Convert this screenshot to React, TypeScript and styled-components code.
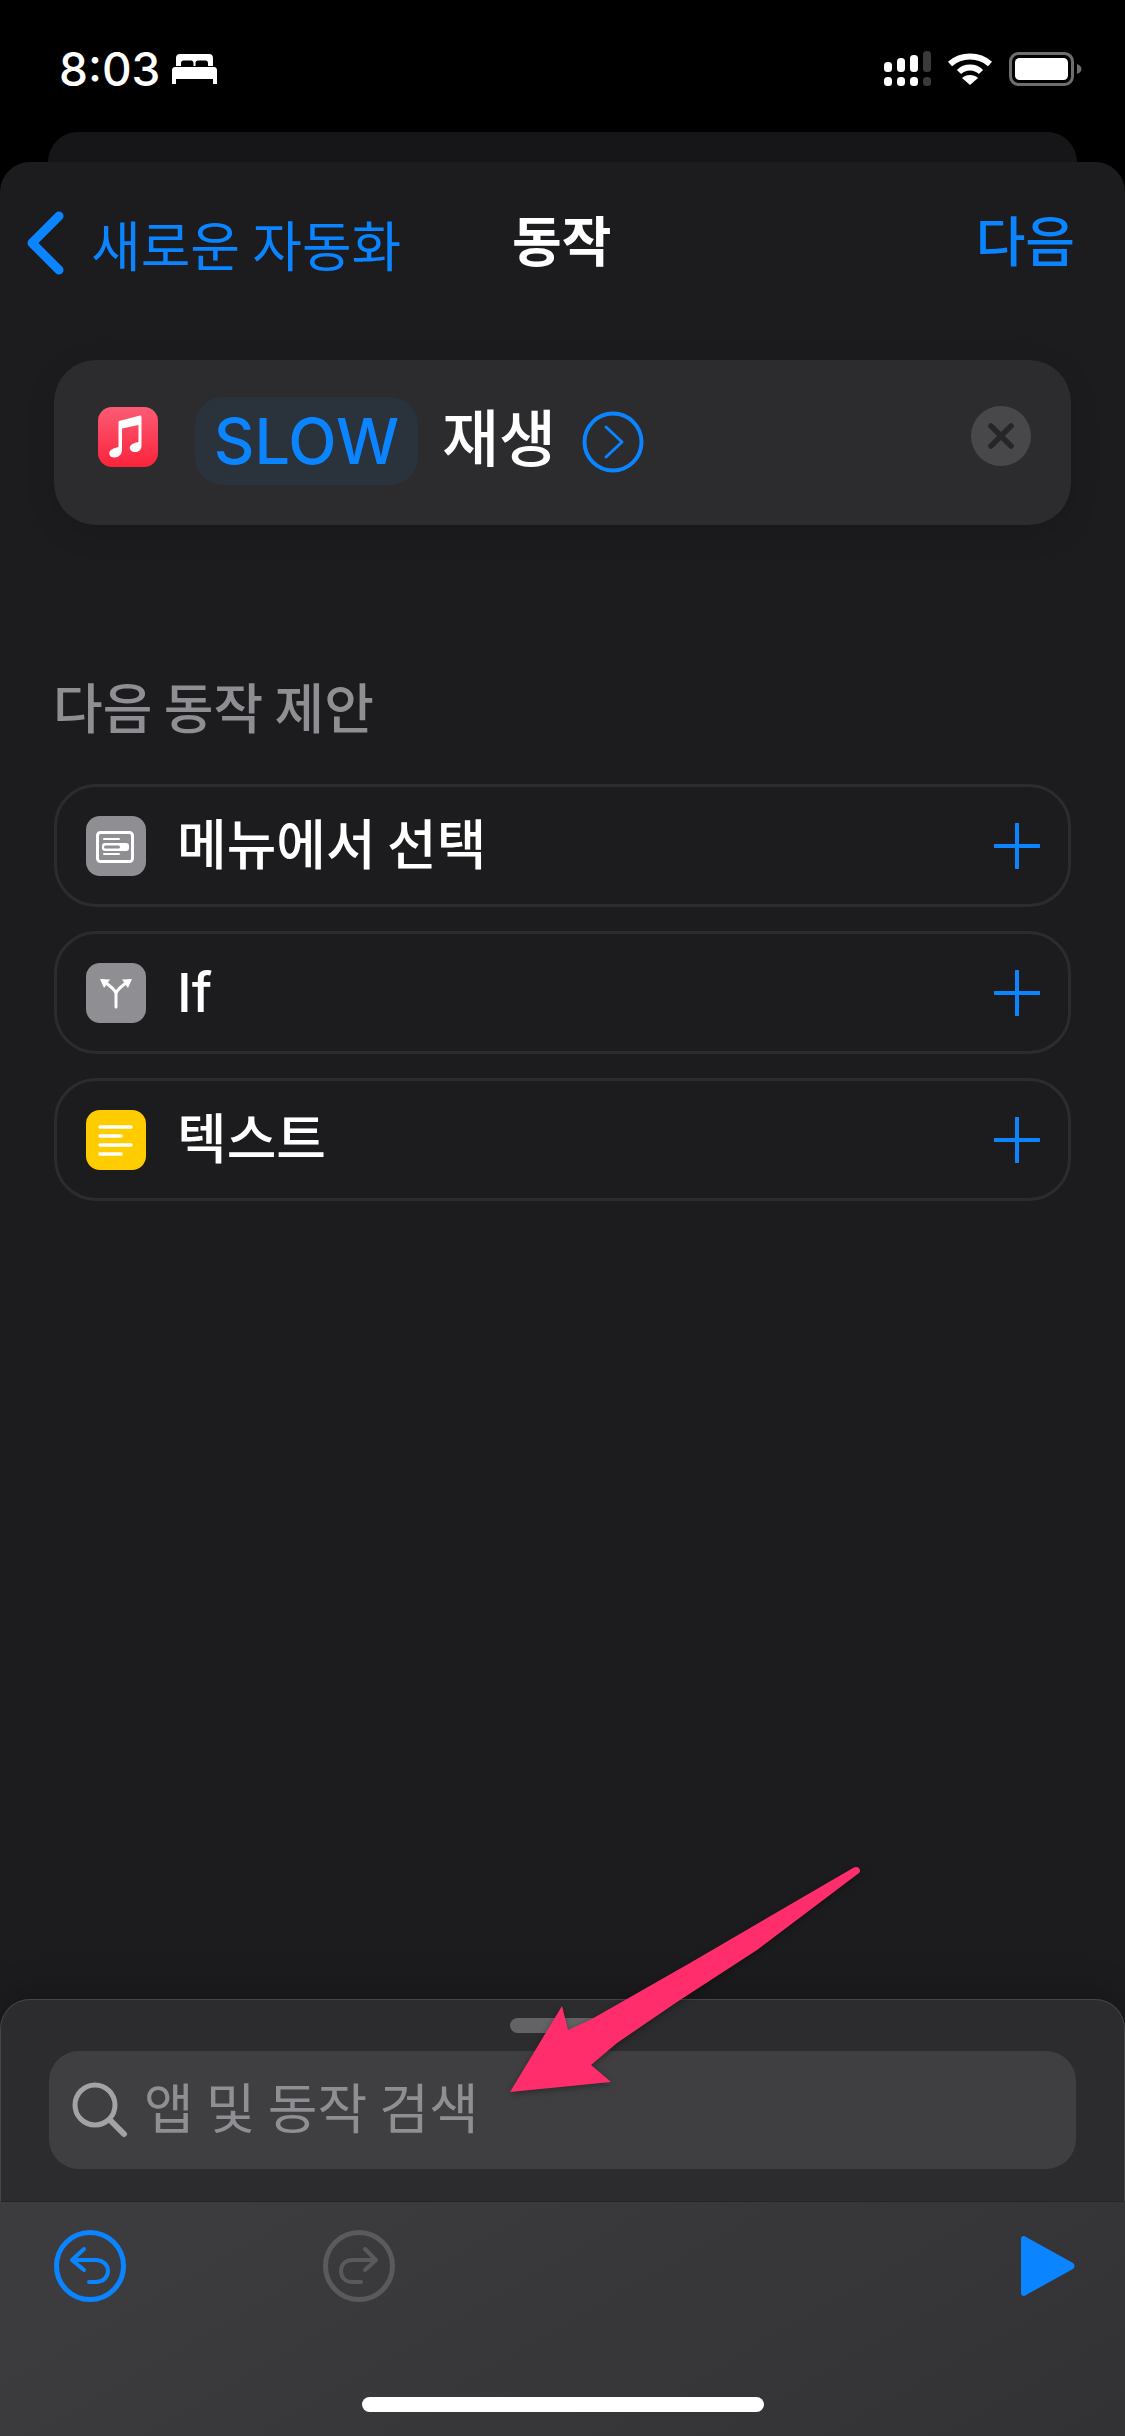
import React from "react";
import styled, { createGlobalStyle } from "styled-components";

const Blue = "#0a84ff";
const KoreanFont = `Inter, "Liberation Sans", "Noto Sans CJK KR", sans-serif`;

const GlobalStyle = createGlobalStyle`
  html, body {
    margin: 0;
    padding: 0;
    background: #000;
  }
  * {
    box-sizing: border-box;
  }
`;

const Screen = styled.div`
  position: relative;
  width: 1125px;
  height: 2436px;
  overflow: hidden;
  background: #000;
  display: flex;
  flex-direction: column;
  font-family: ${KoreanFont};
  word-spacing: -3px;
`;

const StatusBar = styled.div`
  height: 132px;
  padding: 45px 43px 0 59px;
  display: flex;
  justify-content: space-between;
  align-items: flex-start;
`;

const StatusLeft = styled.div`
  display: flex;
  align-items: center;
  gap: 12px;
  height: 48px;
`;

const Time = styled.span`
  color: #fff;
  font-family: Inter, "Liberation Sans", sans-serif;
  font-size: 46px;
  font-weight: 500;
  line-height: 48px;
`;

const StatusRight = styled.div`
  display: flex;
  align-items: center;
  gap: 16px;
  height: 48px;
`;

const BackCard = styled.div`
  height: 30px;
  margin: 0 48px;
  flex-shrink: 0;
  background: #161618;
  border-radius: 30px 30px 0 0;
`;

const Sheet = styled.div`
  flex: 1;
  display: flex;
  flex-direction: column;
  background: #1c1c1e;
  border-radius: 30px 30px 0 0;
`;

const NavBar = styled.div`
  height: 198px;
  padding: 46px 50px 0 26px;
  display: flex;
  align-items: flex-start;
  flex-shrink: 0;
`;

const BackGroup = styled.div`
  width: 486px;
  display: flex;
  align-items: center;
  gap: 27px;
  height: 70px;
  color: ${Blue};
  font-size: 54px;
  white-space: nowrap;
`;

const NavTitle = styled.div`
  flex: 1;
  height: 70px;
  line-height: 70px;
  color: #fff;
  font-size: 54px;
  font-weight: 700;
`;

const NavAction = styled.div`
  height: 70px;
  line-height: 70px;
  color: ${Blue};
  font-size: 54px;
  font-weight: 500;
`;

const ActionCard = styled.div`
  margin: 0 54px;
  height: 165px;
  padding: 37px 40px 0 44px;
  display: flex;
  align-items: flex-start;
  background: #2c2c2e;
  border-radius: 42px;
  box-shadow: 0 8px 30px rgba(0, 0, 0, 0.12);
`;

const AppIcon = styled.div<{ $bg: string }>`
  width: 60px;
  height: 60px;
  flex-shrink: 0;
  display: flex;
  border-radius: 14px;
  background: ${(p) => p.$bg};
`;

const MusicIcon = styled(AppIcon)`
  margin-top: 10px;
`;

const Pill = styled.div`
  width: 223px;
  height: 88px;
  margin-left: 37px;
  display: flex;
  align-items: center;
  justify-content: center;
  background: #2a323c;
  border-radius: 28px;
  color: ${Blue};
  font-size: 63px;
  font-weight: 500;
  line-height: 88px;
`;

const ActionWord = styled.div`
  margin-left: 24px;
  height: 88px;
  line-height: 86px;
  color: #fff;
  font-size: 62px;
  font-weight: 500;
  white-space: nowrap;
`;

const ChevronCircle = styled.div`
  margin-left: 26px;
  margin-top: 14px;
  width: 62px;
  height: 62px;
`;

const CloseButton = styled.div`
  margin-left: auto;
  margin-top: 9px;
  width: 60px;
  height: 60px;
  border-radius: 50%;
  background: #48484a;
  display: flex;
  align-items: center;
  justify-content: center;
`;

const SectionTitle = styled.div`
  margin: 150px 0 0 53px;
  height: 70px;
  line-height: 70px;
  color: #8e8e93;
  font-size: 54px;
  font-weight: 500;
`;

const SuggestionList = styled.div`
  margin: 39px 54px 0;
  display: flex;
  flex-direction: column;
  gap: 24px;
`;

const SuggestionRow = styled.div`
  height: 123px;
  padding: 0 28px 0 29px;
  display: flex;
  align-items: center;
  border: 3px solid #2c2c2e;
  border-radius: 42px;
`;

const SuggestionLabel = styled.div`
  margin-left: 31px;
  flex: 1;
  color: #fff;
  font-size: 54px;
  font-weight: 500;
  line-height: 70px;
`;

const BottomPanel = styled.div`
  margin-top: auto;
  flex-shrink: 0;
  box-shadow: 0 -12px 30px rgba(0, 0, 0, 0.18);
  border-radius: 30px 30px 0 0;
`;

const SearchArea = styled.div`
  height: 203px;
  padding: 18px 48px 0;
  display: flex;
  flex-direction: column;
  align-items: center;
  background: #2c2c2e;
  border: 1px solid #454547;
  border-bottom: 1px solid #252527;
  border-radius: 30px 30px 0 0;
`;

const Handle = styled.div`
  width: 106px;
  height: 15px;
  border-radius: 8px;
  background: #636366;
`;

const SearchField = styled.div`
  width: 100%;
  height: 118px;
  margin-top: 18px;
  padding: 0 0 0 23px;
  display: flex;
  align-items: center;
  gap: 16px;
  background: #3f3f41;
  border-radius: 30px;
`;

const Placeholder = styled.span`
  color: #8e8e93;
  font-size: 54px;
  line-height: 70px;
`;

const Toolbar = styled.div`
  height: 234px;
  padding: 28px 50px 0 54px;
  display: flex;
  flex-direction: column;
  background: linear-gradient(150deg, #3c3c3e 15%, #323234 100%);
`;

const ToolbarButtons = styled.div`
  display: flex;
  align-items: center;
  gap: 197px;
  height: 72px;
`;

const PlayButton = styled.div`
  margin-left: auto;
  display: flex;
`;

const HomeBar = styled.div`
  align-self: center;
  width: 402px;
  height: 15px;
  margin: 95px 0 0 -4px;
  border-radius: 8px;
  background: #fff;
`;

const PointerArrow = styled.svg`
  position: absolute;
  left: 490px;
  top: 1850px;
  filter: drop-shadow(0 2px 3px rgba(0, 0, 0, 0.35));
`;

const SignalIcon = () => (
  <svg width="47" height="36" viewBox="0 0 47 36">
    <g fill="#fff">
      <rect x="0" y="11" width="8" height="10" rx="3.5" />
      <rect x="13" y="7" width="8" height="14" rx="3.5" />
      <rect x="26" y="4" width="8" height="17" rx="3.5" />
      <rect x="0" y="26" width="8" height="9" rx="3.5" />
      <rect x="13" y="26" width="8" height="9" rx="3.5" />
      <rect x="26" y="26" width="8" height="9" rx="3.5" />
    </g>
    <rect x="39" y="0" width="8" height="21" rx="3.5" fill="#3a3a3c" />
    <rect x="39" y="26" width="8" height="9" rx="3.5" fill="#3a3a3c" />
  </svg>
);

const WifiIcon = () => (
  <svg width="46" height="34" viewBox="0 0 46 34" fill="none">
    <path d="M3 12 C14 2 32 2 43 12" stroke="#fff" strokeWidth="6" />
    <path d="M12 20 C18 14 28 14 34 20" stroke="#fff" strokeWidth="6" />
    <path d="M23 33 L15 26 C19 22 27 22 31 26 Z" fill="#fff" />
  </svg>
);

const BatteryIcon = () => (
  <svg width="73" height="34" viewBox="0 0 73 34">
    <rect x="1.5" y="1.5" width="62" height="31" rx="8" fill="none" stroke="#6e6e70" strokeWidth="3" />
    <rect x="6" y="6" width="53" height="22" rx="4.5" fill="#fff" />
    <path d="M68 12 C71 13 72.5 15 72.5 17 C72.5 19 71 21 68 22 Z" fill="#6e6e70" />
  </svg>
);

const BedIcon = () => (
  <svg width="45" height="30" viewBox="0 0 45 30">
    <path
      fill="#fff"
      d="M4 4 C4 1.5 5.5 0 8 0 H37 C39.5 0 41 1.5 41 4 V12 H36 V9 C36 7.5 35 6.5 33.5 6.5 H26 C24.5 6.5 23.5 7.5 23.5 9 V12 H21.5 V9 C21.5 7.5 20.5 6.5 19 6.5 H11.5 C10 6.5 9 7.5 9 9 V12 H4 Z M3 13 H42 C44 13 45 14.5 45 16 V30 H41 V25 H4 V30 H0 V16 C0 14.5 1 13 3 13 Z"
    />
  </svg>
);

const BackChevron = () => (
  <svg width="38" height="64" viewBox="0 0 38 64" fill="none">
    <path d="M33 5 L6 32 L33 59" stroke={Blue} strokeWidth="9" strokeLinecap="round" strokeLinejoin="round" />
  </svg>
);

const MusicNote = () => (
  <svg width="60" height="60" viewBox="0 0 60 60">
    <path
      fill="#fff"
      d="M21 14 L42 8.5 Q43.5 8 43.5 10 V39 C43.5 43 40 45.5 36 45 C33 44.5 31 42 32 39.5 C33 37 36 36 40.5 35 V18 L24 21.5 V43 C24 47 21 50.5 16 50.5 C12.5 50.5 10.5 47.5 11.5 45 C12.5 42.5 15 41.5 20.5 40 V15.5 Q20.5 14.3 21 14 Z"
    />
  </svg>
);

const CircleChevron = () => (
  <svg width="62" height="62" viewBox="0 0 62 62" fill="none">
    <circle cx="31" cy="31" r="28.5" stroke={Blue} strokeWidth="4" />
    <path d="M24 16 L40 31 L24 46" stroke={Blue} strokeWidth="3" strokeLinecap="round" strokeLinejoin="round" />
  </svg>
);

const CloseMark = () => (
  <svg width="26" height="26" viewBox="0 0 26 26" fill="none">
    <path d="M3 3 L23 23 M23 3 L3 23" stroke="#262628" strokeWidth="5.5" strokeLinecap="round" />
  </svg>
);

const MenuGlyph = () => (
  <svg width="60" height="60" viewBox="0 0 60 60" fill="none">
    <rect x="11.5" y="16.5" width="35" height="29" rx="3" stroke="#fff" strokeWidth="3" />
    <path d="M18 23 H33 M18 38 H33" stroke="#fff" strokeWidth="2" strokeLinecap="round" />
    <rect x="16" y="27" width="27" height="8" rx="3" fill="#fff" />
    <rect x="18" y="29.5" width="16" height="3" rx="1.5" fill="#8e8e93" />
  </svg>
);

const BranchGlyph = () => (
  <svg width="60" height="60" viewBox="0 0 60 60" fill="none">
    <path
      d="M30 44 V31 C30 27 25 24 20 20 M30 31 C30 27 35 24 40 20"
      stroke="#fff"
      strokeWidth="3"
      strokeLinecap="round"
    />
    <path d="M14 16 L24 16.5 L18 25 Z M46 16 L36 16.5 L42 25 Z" fill="#fff" />
  </svg>
);

const TextGlyph = () => (
  <svg width="60" height="60" viewBox="0 0 60 60" fill="none">
    <path d="M14 17 H45 M14 26 H35 M14 35 H45 M14 44 H35" stroke="#fff" strokeWidth="3.5" strokeLinecap="round" />
  </svg>
);

const PlusIcon = () => (
  <svg width="46" height="46" viewBox="0 0 46 46" fill="none">
    <path d="M23 1 V45 M1 23 H45" stroke={Blue} strokeWidth="4" strokeLinecap="round" />
  </svg>
);

const SearchGlyph = () => (
  <svg width="56" height="56" viewBox="0 0 56 56" fill="none">
    <circle cx="23" cy="23" r="20" stroke="#a2a2a7" strokeWidth="5" />
    <path d="M38 38 L52 52" stroke="#a2a2a7" strokeWidth="6" strokeLinecap="round" />
  </svg>
);

const UndoIcon = ({ color }: { color: string }) => (
  <svg width="72" height="72" viewBox="0 0 72 72" fill="none">
    <circle cx="36" cy="36" r="33.5" stroke={color} strokeWidth="5" />
    <path
      d="M30 19 L18 30 L30 40 M18 30 H42 C49 30 54 35 54 41 C54 47 49 52 42 52 H35"
      stroke={color}
      strokeWidth="4"
      strokeLinecap="round"
      strokeLinejoin="round"
    />
  </svg>
);

const RedoIcon = ({ color }: { color: string }) => (
  <svg width="72" height="72" viewBox="0 0 72 72" fill="none">
    <circle cx="36" cy="36" r="33.5" stroke={color} strokeWidth="5" />
    <path
      d="M42 19 L53 30 L42 40 M53 30 H29 C22 30 18 35 18 41 C18 47 22 52 29 52 H38"
      stroke={color}
      strokeWidth="4"
      strokeLinecap="round"
      strokeLinejoin="round"
    />
  </svg>
);

const PlayIcon = () => (
  <svg width="54" height="62" viewBox="0 0 54 62">
    <path
      d="M0 4 C0 1 3 0 5 2 L52 28 C54 30 54 32 52 34 L5 60 C3 62 0 61 0 58 Z"
      fill={Blue}
    />
  </svg>
);

const suggestions = [
  { label: "메뉴에서 선택", bg: "#8e8e93", icon: <MenuGlyph /> },
  { label: "If", bg: "#8e8e93", icon: <BranchGlyph /> },
  { label: "텍스트", bg: "#ffcc00", icon: <TextGlyph /> },
];

const App = () => {
  return (
    <Screen>
      <GlobalStyle />
      <StatusBar>
        <StatusLeft>
          <Time>8:03</Time>
          <BedIcon />
        </StatusLeft>
        <StatusRight>
          <SignalIcon />
          <WifiIcon />
          <BatteryIcon />
        </StatusRight>
      </StatusBar>
      <BackCard />
      <Sheet>
        <NavBar>
          <BackGroup>
            <BackChevron />
            새로운 자동화
          </BackGroup>
          <NavTitle>동작</NavTitle>
          <NavAction>다음</NavAction>
        </NavBar>
        <ActionCard>
          <MusicIcon $bg="linear-gradient(180deg, #fb5c74, #fa233b)">
            <MusicNote />
          </MusicIcon>
          <Pill>SLOW</Pill>
          <ActionWord>재생</ActionWord>
          <ChevronCircle>
            <CircleChevron />
          </ChevronCircle>
          <CloseButton>
            <CloseMark />
          </CloseButton>
        </ActionCard>
        <SectionTitle>다음 동작 제안</SectionTitle>
        <SuggestionList>
          {suggestions.map((item) => (
            <SuggestionRow key={item.label}>
              <AppIcon $bg={item.bg}>{item.icon}</AppIcon>
              <SuggestionLabel>{item.label}</SuggestionLabel>
              <PlusIcon />
            </SuggestionRow>
          ))}
        </SuggestionList>
        <BottomPanel>
          <SearchArea>
            <Handle />
            <SearchField>
              <SearchGlyph />
              <Placeholder>앱 및 동작 검색</Placeholder>
            </SearchField>
          </SearchArea>
          <Toolbar>
            <ToolbarButtons>
              <UndoIcon color={Blue} />
              <RedoIcon color="#5a5a5c" />
              <PlayButton>
                <PlayIcon />
              </PlayButton>
            </ToolbarButtons>
            <HomeBar />
          </Toolbar>
        </BottomPanel>
      </Sheet>
      <PointerArrow width="400" height="270" viewBox="0 0 400 270">
        <path
          fill="#ff2d6b"
          d="M20 242 L72 156 L78 180 L100 170 L200 113 L363 18 C368 15 372 20 369 23 L267 100 L187 152 L127 193 L101 215 L121 232 Z"
        />
      </PointerArrow>
    </Screen>
  );
};

export default App;
